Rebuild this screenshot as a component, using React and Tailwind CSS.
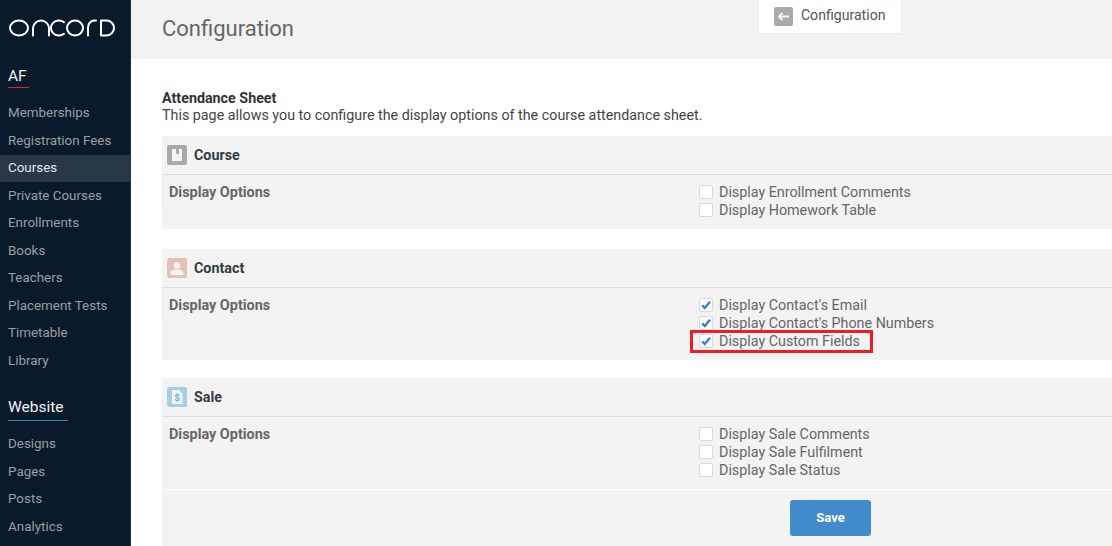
import React from "react";

const font = { fontFamily: "Roboto, sans-serif" };

const mainLinks = [
  "Memberships",
  "Registration Fees",
  "Courses",
  "Private Courses",
  "Enrollments",
  "Books",
  "Teachers",
  "Placement Tests",
  "Timetable",
  "Library",
];
const siteLinks = ["Designs", "Pages", "Posts", "Analytics"];

function Logo() {
  return (
    <svg width="106" height="18" viewBox="0 0 106 18" fill="none" stroke="#fff" strokeWidth="2" strokeLinecap="round" strokeLinejoin="round">
      <ellipse cx="10" cy="9" rx="9" ry="7.5" />
      <path d="M24 16.5V9.5a8 8 0 0 1 16 0v7" />
      <path d="M55 3.2A8 7.5 0 1 0 55 14.8" />
      <ellipse cx="66" cy="9" rx="8" ry="7.5" />
      <path d="M79 16.5V8.5a6.5 7 0 0 1 6.5-7H87" />
      <path d="M92 1.5h5.5a7.5 7.5 0 0 1 0 15H92z" />
    </svg>
  );
}

function SideLink({ label }) {
  const active = label === "Courses";
  return (
    <div
      className={
        active
          ? "h-[27.5px] flex items-center pl-2 text-[13.4px] text-[#e4e6e8] bg-[#2a3747]"
          : "h-[27.5px] flex items-center pl-2 text-[13.4px] text-[#9a9fa5]"
      }
    >
      {label}
    </div>
  );
}

function BoxIcon() {
  return (
    <svg width="20" height="20" viewBox="0 0 20 20">
      <rect width="20" height="20" rx="2" fill="#a9a9a9" />
      <path d="M5 4h10v12H5z" fill="#f4f4f4" />
      <path d="M9 4h3v5H9z" fill="#a9a9a9" />
    </svg>
  );
}

function ContactIcon() {
  return (
    <svg width="20" height="20" viewBox="0 0 20 20">
      <rect width="20" height="20" rx="2" fill="#e3c2b5" />
      <circle cx="10" cy="7.5" r="3.2" fill="#f8f3f0" />
      <path d="M3.5 17v-2.2c0-2 2.6-3.3 6.5-3.3s6.5 1.3 6.5 3.3V17z" fill="#f8f3f0" />
    </svg>
  );
}

function SaleIcon() {
  return (
    <svg width="20" height="20" viewBox="0 0 20 20">
      <rect width="20" height="20" rx="2" fill="#a9cde6" />
      <path d="M5 3h7l3.5 3.5V17H5z" fill="#eef5fa" />
      <text x="10.2" y="14" textAnchor="middle" fontSize="9" fontWeight="700" fill="#6fa6cc" style={font}>
        $
      </text>
    </svg>
  );
}

function Option({ label, checked }) {
  return (
    <div className="h-[18px] flex items-center">
      <span className="w-3.5 h-3.5 mb-0.5 mr-1.5 rounded-[2px] bg-white border border-[#d8d8d8] flex items-center justify-center">
        {checked && (
          <svg width="12" height="12" viewBox="0 0 12 12" fill="none" stroke="#2f7ec4" strokeWidth="2.2">
            <path d="M2.2 6.4 4.8 9 10 2.6" />
          </svg>
        )}
      </span>
      <span className="text-[14.3px] text-[#666]">{label}</span>
    </div>
  );
}

function Section({ icon, title, options, className }) {
  return (
    <section className={"bg-[#f3f3f3] " + className}>
      <div className="h-[39px] flex items-center pl-[5px] border-b border-[#dcdcdc]">
        {icon}
        <h3 className="ml-[7px] pt-[2px] text-[14.3px] font-bold text-[#333b42]">{title}</h3>
      </div>
      <div className="flex pt-[9px] pb-[9px]">
        <div className="w-[537px] pl-[7px] text-[14.4px] leading-[18px] font-bold text-[#666]">Display Options</div>
        <div>
          {options.map((o) => (
            <Option key={o.label} label={o.label} checked={o.checked} />
          ))}
        </div>
      </div>
    </section>
  );
}

export default function App() {
  return (
    <div className="w-[1112px] h-[546px] overflow-hidden flex bg-white" style={font}>
      <aside className="w-[131px] shrink-0 bg-[#0a1a2a] border-r border-[#1c3042]">
        <div className="pt-[19px] pl-[9px] h-[60px]">
          <Logo />
        </div>
        <div className="pl-2 mt-[4px] mb-[11.5px]">
          <div className="inline-block w-[21px] h-[23px] text-[15.5px] leading-[22px] text-[#f0f1f2] border-b border-[#e0202c]">AF</div>
        </div>
        <nav>
          {mainLinks.map((l) => (
            <SideLink key={l} label={l} />
          ))}
        </nav>
        <div className="pl-2 mt-[20.5px] mb-[9.5px]">
          <div className="inline-block w-[60px] h-[24px] text-[15.5px] leading-[20px] text-[#f0f1f2] border-b border-[#4a7fb5]">Website</div>
        </div>
        <nav>
          {siteLinks.map((l) => (
            <SideLink key={l} label={l} />
          ))}
        </nav>
      </aside>

      <main className="flex-1 min-w-0">
        <header className="h-[59px] bg-[#f2f2f2] flex items-start pl-[31px]">
          <h1 className="mt-[15px] text-[22px] leading-[28px] text-[#666]">Configuration</h1>
          <div className="ml-[464px] w-[144px] h-[34px] bg-white border border-[#ececec] border-t-0 flex items-center pl-[15px] pb-px">
            <svg width="19" height="19" viewBox="0 0 19 19" fill="none">
              <rect width="19" height="19" rx="2" fill="#a9a9a9" />
              <path d="M15 9.5H5M8.5 6 5 9.5 8.5 13" stroke="#f6f6f6" strokeWidth="2" />
            </svg>
            <span className="ml-2 text-[14.1px] text-[#555]">Configuration</span>
          </div>
        </header>

        <div className="pl-[31px] pt-[31px]">
          <h2 className="text-[14.3px] leading-[16px] font-bold text-[#333]">Attendance Sheet</h2>
          <p className="text-[14.3px] leading-[18px] text-[#444]">This page allows you to configure the display options of the course attendance sheet.</p>

          <Section
            className="mt-3"
            icon={<BoxIcon />}
            title="Course"
            options={[{ label: "Display Enrollment Comments" }, { label: "Display Homework Table" }]}
          />
          <Section
            className="mt-5"
            icon={<ContactIcon />}
            title="Contact"
            options={[
              { label: "Display Contact's Email", checked: true },
              { label: "Display Contact's Phone Numbers", checked: true },
              { label: "Display Custom Fields", checked: true },
            ]}
          />
          <Section
            className="mt-[18px]"
            icon={<SaleIcon />}
            title="Sale"
            options={[{ label: "Display Sale Comments" }, { label: "Display Sale Fulfilment" }, { label: "Display Sale Status" }]}
          />
          <div className="h-[57px] bg-[#f3f3f3] border-t border-white pt-[10px] pl-[628px]">
            <button className="w-[81px] h-[36px] rounded-[3px] bg-[#428bca] text-white text-[13px] font-bold">Save</button>
          </div>
        </div>
      </main>

      <div className="absolute left-[690px] top-[330px] w-[183px] h-[23px] border-[3px] border-[#ee1c25]" />
    </div>
  );
}
